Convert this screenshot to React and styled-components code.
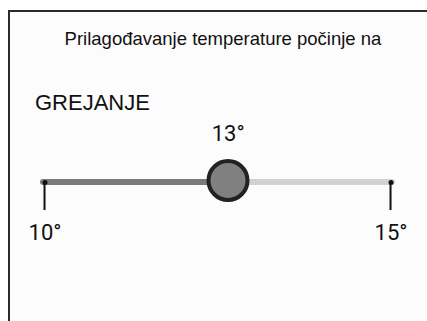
import React from "react";
import styled, { createGlobalStyle } from "styled-components";

const Global = createGlobalStyle`
  html, body { margin: 0; padding: 0; background: #ffffff; overflow: hidden; }
  #root { width: 427px; height: 321px; overflow: hidden; }
`;

const Frame = styled.div`
  margin: 10px 0 0 8px;
  height: 330px;
  border-top: 2px solid #2b2b2b;
  border-left: 2px solid #2b2b2b;
  background: #fcfcfc;
  box-sizing: border-box;
  padding-top: 16px;
  font-family: "Liberation Sans", Arial, sans-serif;
  color: #111;
`;

const Title = styled.div`
  font-size: 18.5px;
  line-height: 21px;
  text-align: center;
  padding-left: 9px;
`;

const Mode = styled.div`
  margin-top: 41px;
  padding-left: 25px;
  font-size: 22px;
  line-height: 25px;
`;

const Slider = styled.div`
  position: relative;
  margin-left: 30px;
  width: 355px;
  height: 130px;
  padding-top: 64px;
  box-sizing: border-box;
`;

const Track = styled.div`
  height: 6px;
  border-radius: 3px;
`;

const Thumb = styled.div`
  position: absolute;
  top: 44px;
  width: 43px;
  height: 43px;
  box-sizing: border-box;
  border-radius: 50%;
  border: 4px solid #222;
  background: #808080;
  transform: translateX(-50%);
`;

const Value = styled.div`
  position: absolute;
  top: 5.5px;
  transform: translateX(-50%);
  font-family: Roboto, "Noto Sans", sans-serif;
  font-size: 22px;
  line-height: 26px;
  color: #111;
`;

const Tick = styled.div`
  position: absolute;
  top: 64.5px;
  left: ${(p) => p.$x}px;
  display: flex;
  flex-direction: column;
  align-items: center;
  transform: translateX(-50%);
`;

const Dot = styled.div`
  width: 5px;
  height: 5px;
  border-radius: 50%;
  background: #111;
`;

const Stem = styled.div`
  width: 2px;
  height: 26px;
  margin-top: -1px;
  background: #111;
`;

const TickLabel = styled.div`
  margin-top: 10px;
  font-family: Roboto, "Noto Sans", sans-serif;
  font-size: 22px;
  line-height: 26px;
  color: #111;
  white-space: nowrap;
`;

export default function App() {
  const pos = 53; // percent of track where thumb sits
  return (
    <>
      <Global />
      <Frame>
        <Title>Prilagođavanje temperature počinje na</Title>
        <Mode>GREJANJE</Mode>
        <Slider>
          <Track
            style={{
              background: `linear-gradient(to right, #7b7b7b ${pos}%, #d2d2d2 ${pos}%)`,
            }}
          />
          <Tick $x={5}>
            <Dot />
            <Stem />
            <TickLabel>10°</TickLabel>
          </Tick>
          <Tick $x={351}>
            <Dot />
            <Stem />
            <TickLabel>15°</TickLabel>
          </Tick>
          <Value style={{ left: `${pos}%` }}>13°</Value>
          <Thumb style={{ left: `${pos}%` }} />
        </Slider>
      </Frame>
    </>
  );
}
